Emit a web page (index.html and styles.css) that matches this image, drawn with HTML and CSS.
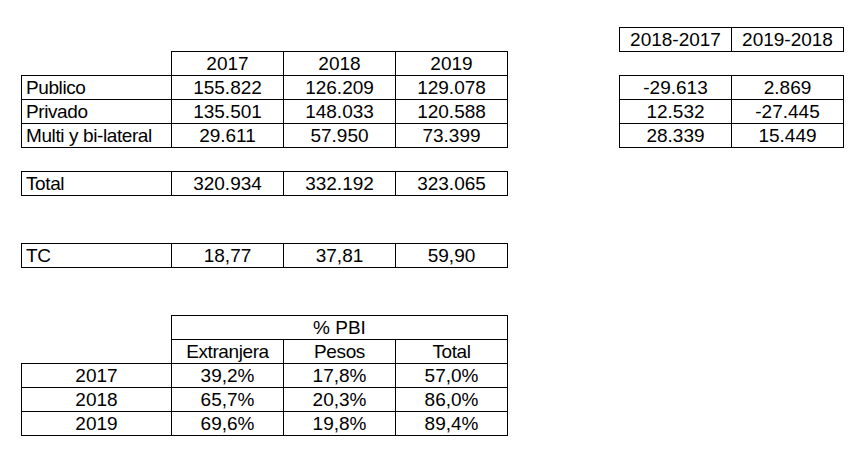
FILE: index.html
```html
<!DOCTYPE html>
<html lang="es">
<head>
<meta charset="utf-8">
<title>Deuda</title>
<link rel="stylesheet" href="styles.css">
</head>
<body>
<div class="sheet">
  <div class="left">
    <div class="grid cols3 hdr offset">
      <div class="cell">2017</div>
      <div class="cell">2018</div>
      <div class="cell">2019</div>
    </div>
    <div class="grid cols4">
      <div class="cell lab">Publico</div><div class="cell">155.822</div><div class="cell">126.209</div><div class="cell">129.078</div>
      <div class="cell lab">Privado</div><div class="cell">135.501</div><div class="cell">148.033</div><div class="cell">120.588</div>
      <div class="cell lab">Multi y bi-lateral</div><div class="cell">29.611</div><div class="cell">57.950</div><div class="cell">73.399</div>
    </div>
    <div class="grid cols4 total">
      <div class="cell lab">Total</div><div class="cell">320.934</div><div class="cell">332.192</div><div class="cell">323.065</div>
    </div>
    <div class="grid cols4 spaced">
      <div class="cell lab">TC</div><div class="cell">18,77</div><div class="cell">37,81</div><div class="cell">59,90</div>
    </div>
    <div class="grid cols3 hdr offset spaced">
      <div class="cell span">% PBI</div>
      <div class="cell txt">Extranjera</div>
      <div class="cell txt">Pesos</div>
      <div class="cell txt">Total</div>
    </div>
    <div class="grid cols4">
      <div class="cell">2017</div><div class="cell">39,2%</div><div class="cell">17,8%</div><div class="cell">57,0%</div>
      <div class="cell">2018</div><div class="cell">65,7%</div><div class="cell">20,3%</div><div class="cell">86,0%</div>
      <div class="cell">2019</div><div class="cell">69,6%</div><div class="cell">19,8%</div><div class="cell">89,4%</div>
    </div>
  </div>
  <div class="right">
    <div class="grid cols2">
      <div class="cell">2018-2017</div><div class="cell">2019-2018</div>
    </div>
    <div class="grid cols2 diffs">
      <div class="cell">-29.613</div><div class="cell">2.869</div>
      <div class="cell">12.532</div><div class="cell">-27.445</div>
      <div class="cell">28.339</div><div class="cell">15.449</div>
    </div>
  </div>
</div>
</body>
</html>
```

FILE: styles.css
```css
html, body {
  margin: 0;
  padding: 0;
  background: #fff;
}

body {
  font-family: "Liberation Sans", Arial, sans-serif;
  font-size: 19px;
  color: #000;
}

.sheet {
  display: flex;
  align-items: flex-start;
  padding: 27px 0 0 21px;
  gap: 111px;
}

.left {
  display: flex;
  flex-direction: column;
  align-items: flex-start;
  margin-top: 24px;
}

.right {
  display: flex;
  flex-direction: column;
  align-items: flex-start;
}

.grid {
  display: grid;
  gap: 1px;
  background: #000;
  border: 1px solid #000;
  grid-auto-rows: 23px;
}

.cols4 { grid-template-columns: 149px 111px 111px 111px; }
.cols3 { grid-template-columns: 111px 111px 111px; }
.cols2 { grid-template-columns: 111px 111px; }

.hdr { border-bottom: none; }
.offset { margin-left: 150px; }

.total { margin-top: 23px; }
.spaced { margin-top: 47px; }
.diffs { margin-top: 23px; }

.cell {
  background: #fff;
  line-height: 23px;
  text-align: center;
  white-space: nowrap;
  overflow: hidden;
}

.lab {
  text-align: left;
  padding-left: 4px;
  letter-spacing: -0.4px;
}

.txt { letter-spacing: -0.4px; }

.span { grid-column: 1 / -1; }
```
